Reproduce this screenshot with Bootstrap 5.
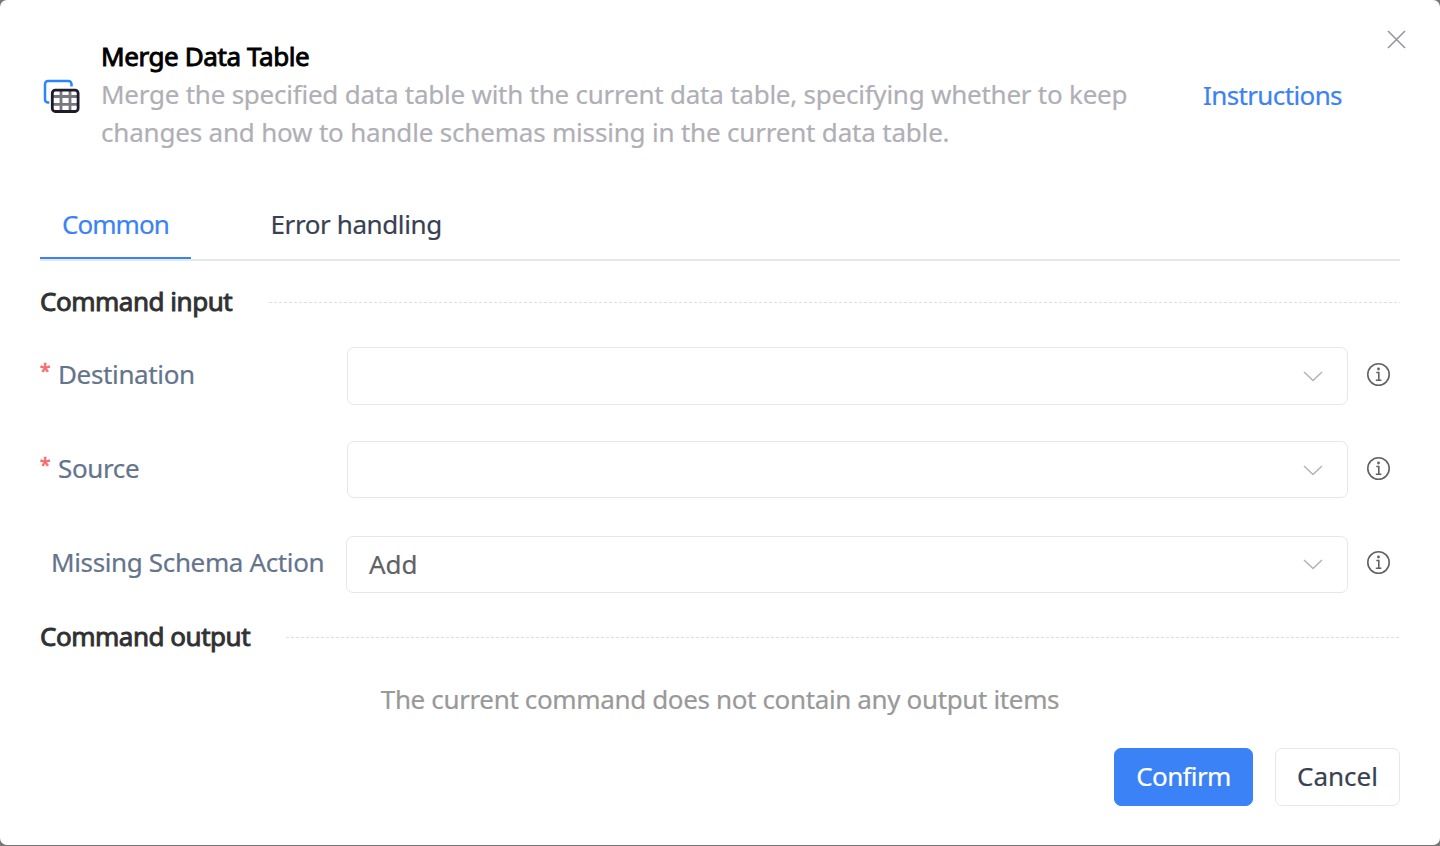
<!DOCTYPE html>
<html lang="en">
<head>
<meta charset="utf-8">
<meta name="viewport" content="width=device-width, initial-scale=1">
<title>Merge Data Table</title>
<link href="https://cdn.jsdelivr.net/npm/bootstrap@5.3.0/dist/css/bootstrap.min.css" rel="stylesheet">
<style>
body{background:#777;font-family:"Noto Sans",sans-serif;font-size:26px;line-height:38px;color:#303133;overflow:hidden;-webkit-text-stroke-width:.2px}
.dialog{height:845px;border-radius:7px;padding:37px 40px 0}
.dialog span,.dialog h1,.dialog h2,.dialog p{white-space:nowrap}
.head{height:115px}
.head-icon{width:61px;padding-top:42px;padding-left:3px}
.title{font-size:26px;line-height:38px;font-weight:400;color:#000;-webkit-text-stroke:.9px #000;letter-spacing:-.4px}
.desc{color:#b0afb5;letter-spacing:-.237px;width:1026px}
.desc-end{letter-spacing:-.19px}
.close-x{top:29px;right:34px;padding:0;border:0;background:none;line-height:0}
.help-link{color:#3b82f6;margin-left:76px;margin-top:39px;letter-spacing:-.62px}
.tabs{height:109px;border-bottom:2px solid #e4e7ed;padding-top:51px}
.tabs .nav-link{height:56px;padding:2px 22px 0;color:#374151;border-radius:0;line-height:38px;letter-spacing:-.4px}
.tabs .nav-link.active{color:#3b82f6;width:151px;border-bottom:2px solid #3b82f6;letter-spacing:-.95px}
.tabs .nav-link+.nav-link{margin-left:57.500px}
.sect{height:38px}
.sect h2{font-size:26px;line-height:38px;font-weight:400;-webkit-text-stroke:.9px #303133;letter-spacing:-.48px;padding-bottom:2px}
.rule{height:1px;background:repeating-linear-gradient(90deg,#dcdfe6 0 3px,transparent 3px 5px)}
.field{height:58px}
.field-name{width:307px;color:#64748b;padding-bottom:4px;letter-spacing:-.36px}
.star{color:#f56c6c;width:18px;font-size:19px;line-height:33px;-webkit-text-stroke-width:.7px}
.pick{height:58px;border:1px solid #e4e7ed;border-radius:7px;padding:0 23px 0 22px;color:#606266;background:#fff}
.pick-source{height:57px;margin-bottom:1px}
.info{margin:0 9px 3px 18px}
.none{color:#999;letter-spacing:-.36px}
.act{height:58px;border-radius:7px;font-size:26px;line-height:38px;padding:0 0 2px;border:1px solid #e4e7ed;color:#374151;background:#fff;white-space:nowrap}
.act-ok{background:#3b82f6;border-color:#3b82f6;color:#fff;letter-spacing:-.65px}
</style>
</head>
<body>
<main class="dialog bg-white position-relative d-flex flex-column">
  <button class="close-x position-absolute" aria-label="Close"><svg width="20" height="20" viewBox="0 0 20 20"><path d="M2 2l17 17M19 2l-17 17" stroke="#909399" stroke-width="1.500"/></svg></button>
  <header class="head d-flex">
    <div class="head-icon flex-shrink-0">
      <svg class="d-block" width="38" height="36" viewBox="0 0 38 36" fill="none">
        <path d="M6.300 23.500H5a3 3 0 0 1-3-3V5a3 3 0 0 1 3-3h20.500a3 3 0 0 1 3 3v2.500" stroke="#2a86ff" stroke-width="2.500"/>
        <path d="M9.500 17.500h26M9.500 25.300h26M18 11v21M27 11v21" stroke="#77757e" stroke-width="2.800"/>
        <rect x="9.300" y="11.200" width="25.800" height="21.300" rx="3" stroke="#1e1b2b" stroke-width="2.800"/>
      </svg>
    </div>
    <div>
      <h1 class="title mb-0">Merge Data Table</h1>
      <p class="desc mb-0">Merge the specified data table with the current data table, specifying whether to keep<br><span class="desc-end">changes and how to handle schemas missing in the current data table.</span></p>
    </div>
    <a class="help-link text-decoration-none" href="#">Instructions</a>
  </header>
  <nav class="tabs nav flex-nowrap">
    <a class="nav-link active" href="#">Common</a>
    <a class="nav-link" href="#"><span>Error handling</span></a>
  </nav>
  <section class="sect d-flex align-items-center" style="margin-top:22px"><h2 class="mb-0">Command input</h2><div class="rule flex-grow-1" style="margin-left:37px"></div></section>

  <div class="field d-flex align-items-center" style="margin-top:26px">
    <div class="field-name d-flex"><span class="star">*</span><span>Destination</span></div>
    <div class="pick d-flex align-items-center justify-content-end flex-grow-1"><svg width="22" height="14" viewBox="0 0 22 14" fill="none"><path d="M2 3l9 8.500 9-8.500" stroke="#b0b3bb" stroke-width="1.500"/></svg></div>
    <svg class="info" width="25" height="25" viewBox="0 0 25 25" fill="none" stroke="#606266"><circle cx="12.500" cy="12.500" r="10.700" stroke-width="1.600"/><path d="M10.300 10.500h2.500v7M9.800 18.200h5.600" stroke-width="1.600"/><circle cx="12.500" cy="7" r="1.400" fill="#606266" stroke="none"/></svg>
  </div>
  <div class="field d-flex align-items-center" style="margin-top:36px">
    <div class="field-name d-flex"><span class="star">*</span><span>Source</span></div>
    <div class="pick pick-source d-flex align-items-center justify-content-end flex-grow-1"><svg width="22" height="14" viewBox="0 0 22 14" fill="none"><path d="M2 3l9 8.500 9-8.500" stroke="#b0b3bb" stroke-width="1.500"/></svg></div>
    <svg class="info" width="25" height="25" viewBox="0 0 25 25" fill="none" stroke="#606266"><circle cx="12.500" cy="12.500" r="10.700" stroke-width="1.600"/><path d="M10.300 10.500h2.500v7M9.800 18.200h5.600" stroke-width="1.600"/><circle cx="12.500" cy="7" r="1.400" fill="#606266" stroke="none"/></svg>
  </div>
  <div class="field d-flex align-items-center" style="margin-top:36px">
    <div class="field-name" style="width:306px;padding-left:11px"><span>Missing Schema Action</span></div>
    <div class="pick d-flex align-items-center justify-content-between flex-grow-1" style="height:57px"><span>Add</span><svg width="22" height="14" viewBox="0 0 22 14" fill="none"><path d="M2 3l9 8.500 9-8.500" stroke="#b0b3bb" stroke-width="1.500"/></svg></div>
    <svg class="info" width="25" height="25" viewBox="0 0 25 25" fill="none" stroke="#606266"><circle cx="12.500" cy="12.500" r="10.700" stroke-width="1.600"/><path d="M10.300 10.500h2.500v7M9.800 18.200h5.600" stroke-width="1.600"/><circle cx="12.500" cy="7" r="1.400" fill="#606266" stroke="none"/></svg>
  </div>
  <section class="sect d-flex align-items-center" style="margin-top:25px"><h2 class="mb-0">Command output</h2><div class="rule flex-grow-1" style="margin-left:36px"></div></section>
  <p class="none text-center mb-0" style="margin-top:24px">The current command does not contain any output items</p>
  <footer class="d-flex justify-content-end" style="margin-top:30px;gap:22px">
    <button class="btn act act-ok" style="width:139px">Confirm</button>
    <button class="btn act" style="width:125px">Cancel</button>
  </footer>
</main>
<script src="https://cdn.jsdelivr.net/npm/bootstrap@5.3.0/dist/js/bootstrap.bundle.min.js"></script>
</body>
</html>
